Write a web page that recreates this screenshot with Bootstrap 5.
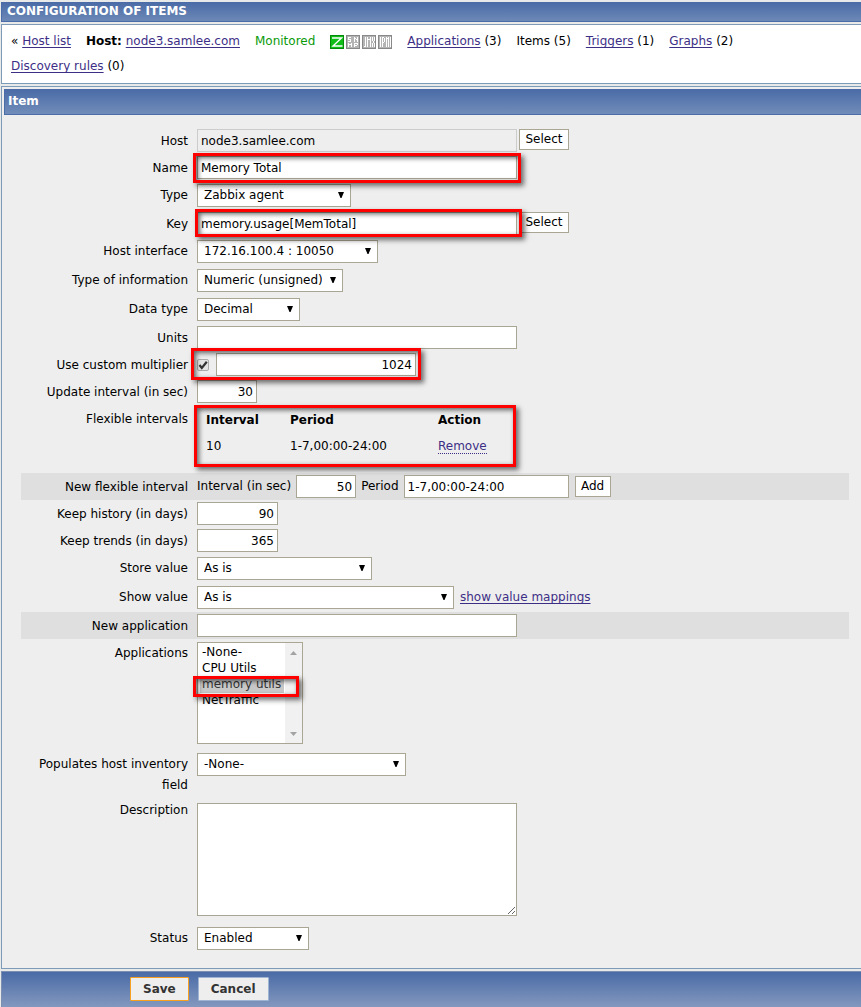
<!DOCTYPE html>
<html lang="en">
<head>
<meta charset="utf-8">
<meta name="viewport" content="width=device-width, initial-scale=1">
<title>Configuration of items</title>
<link href="https://cdn.jsdelivr.net/npm/bootstrap@5.3.0/dist/css/bootstrap.min.css" rel="stylesheet">
<style>
body{font-family:"DejaVu Sans",Verdana,sans-serif;font-size:12px;line-height:21px;color:#000;background:#e8eaea;padding:2px 0 0 1px}
a{color:#3d2f86;text-decoration:underline;text-underline-offset:2px;text-decoration-skip-ink:none}
.title-bar{height:20px;line-height:19px;font-size:12px;padding-left:5px;margin:0 0 2px;color:#fff;background:linear-gradient(#4a6ba7,#6c88b6);border:solid #4a6da9;border-width:0 0 1px 1px}
.host-nav{border:1px solid #7d9ab8;border-right:0;padding:4px 12px 4px 9px;column-gap:15px;background:#fff;margin-bottom:2px;line-height:25px}
.monitored{color:#0a9a0a}
.panel{border:1px solid #7d9ab8;border-right:0;background:#eee;padding:2px 0 15px 2px;margin-bottom:2px}
.item-bar{height:26px;line-height:24px;font-size:12px;padding-left:3px;margin:0 0 12px;color:#fff;background:linear-gradient(#4a6ba7,#718cb9);border:solid #4a6da9;border-width:0 0 1px 1px}
.form-rows{padding:0 12px 0 17px}
.f-row{display:flex;align-items:flex-start;padding:2px 0}
.f-row.sel{padding:3px 0}
.f-row.shade{background:#dfdfdf}
.f-row.flex-int{padding-bottom:14px}
.f-row.apps{padding-bottom:6px}
.f-row.inv{padding-bottom:0}
.f-row.desc{padding:4px 0 8px}
.f-row.desc .f-field{padding-top:3px}
.f-label{flex:0 0 167px;text-align:right;margin-right:9px;padding-top:2px}
.f-row.sel .f-label{padding-top:1px}
.f-row.desc .f-label{padding-top:0}
.f-field{display:flex;align-items:flex-start;position:relative}
.form-control,.form-select{font-size:12px;line-height:19px;color:#000;border:1px solid #aaa694;border-radius:0;background-color:#fff;height:23px;min-height:0;padding:1px 3px}
.form-control[readonly]{background:#eee;border-color:#ccc}
.form-select{padding:1px 20px 1px 6px;background-image:url("data:image/svg+xml,%3Csvg xmlns='http://www.w3.org/2000/svg' viewBox='0 0 6 6'%3E%3Cpath d='M0 0h6L3.5 6h-1z'/%3E%3C/svg%3E");background-size:6px 6px;background-position:right 6px top 7px}
textarea.form-control{height:113px;resize:both}
.num{text-align:right}
.w60{width:60px}.w81{width:81px}.w103{width:103px}.w112{width:112px}.w146{width:146px}.w154{width:154px}.w165{width:165px}.w175{width:175px}.w181{width:181px}.w200{width:200px}.w209{width:209px}.w257{width:257px}.w320{width:320px}
.btn-z{font-size:12px;line-height:17px;width:50px;height:21px;padding:1px 0;margin-left:2px;border:1px solid #aaa694;border-radius:0;background:#fff;color:#000}
.new-int{gap:5px}
.new-int .btn-z{width:36px;margin-left:1px}
.maps{margin-left:6px;padding-top:1px}
.btn-foot{font-size:12px;font-weight:700;line-height:18px;height:24px;padding:2px 12px;border:1px solid #9fb3d2;border-radius:1px;background:#eee;color:#333}
.btn-foot.main{border-color:#f8a020}
.form-check-input{width:12px;height:12px;margin:0 7px 0 0;border:1px solid #aaa;border-radius:2px!important}
.form-check-input:checked{border-color:#aaa;background:#e4e4e4 url("data:image/svg+xml,%3Csvg xmlns='http://www.w3.org/2000/svg' viewBox='0 0 10 10'%3E%3Cpath d='M1.5 5l2.3 3L8.8 1.8' fill='none' stroke='%23333' stroke-width='2.2'/%3E%3C/svg%3E") center/10px no-repeat}
.int-table{margin-left:9px;line-height:26px}
.int-table td,.int-table th{padding:0}
.int-table .c1{width:84px}.int-table .c2{width:148px}
.dotted{text-decoration:none;border-bottom:1px dotted #3d2f86}
.list-box{display:block;width:106px;height:102px;padding:2px 2px 0;border:1px solid #aaa694;border-radius:0;background:#fff;color:#000;font-size:12px;overflow:hidden;scrollbar-width:none}
.list-box option{height:16px;min-height:16px;line-height:16px;padding:0 2px;width:84px}
.list-box option:checked{background:#c8c8c8 linear-gradient(#c8c8c8,#c8c8c8);color:#333}
.scroll-strip{position:absolute;top:1px;bottom:1px;right:1px;width:17px;background:#f1f1f1;pointer-events:none}
.hl{position:absolute;border:3px solid #f00;box-shadow:3px 3px 5px rgba(0,0,0,.55),inset 2px 2px 5px rgba(0,0,0,.6);pointer-events:none;z-index:2}
.hl-name{inset:-3px -4px -4px -4px}
.hl-key{top:-3px;left:-2px;width:327px;height:28px}
.hl-mult{inset:-5px -5px -4px -6px}
.hl-int{top:-2px;left:-3px;width:322px;height:62px}
.hl-app{top:34px;left:-4px;width:106px;height:21px}
.foot{border:1px solid #7d8fb0;border-width:1px 0 0 1px;padding:5px 0 6px 128px;gap:9px;background:linear-gradient(#4a6ba7,#8398be)}
</style>
</head>
<body>
<h1 class="title-bar fw-bold">CONFIGURATION OF ITEMS</h1>
<nav class="host-nav d-flex flex-wrap">
  <span>« <a href="#">Host list</a></span>
  <span><b>Host:</b> <a href="#">node3.samlee.com</a></span>
  <span class="monitored">Monitored</span>
  <span class="d-flex align-items-center">
    <svg width="62" height="14" viewBox="0 0 62 14" shape-rendering="crispEdges" role="img" aria-label="Agent availability">
      <path fill="#078a0b" d="M0 0h14v14H0z"/><path fill="#10be18" d="M1 1h12v12H1z"/>
      <path d="M2 3h9.500l-8.500 8h9.500" fill="none" stroke="#fff" stroke-width="1.400" shape-rendering="auto"/>
      <path fill="#888" d="M16 0h14v14H16zM32 0h14v14H32zM48 0h14v14H48z"/>
      <path fill="#b4b4b4" d="M17 1h12v12H17zM33 1h12v12H33zM49 1h12v12H49z"/>
      <g fill="none" stroke="#fff">
        <path d="M18 2.500h3M18.500 3v1M18 4.500h3M20.500 5v1M18 6.500h3M24.500 2v5M27.500 2v5M25 3.500h1M26 4.500h1M18.500 8v4M21.500 8v4M19 9.500h2M24.500 8v4M25 8.500h2M27.500 8v2M25 10.500h2"/>
        <path d="M35.500 2v9M34 11.500h2M37.500 2v10M40.500 2v10M38 4.500h2M42.500 2v4M44.500 2v4M43.500 6v2M42.500 8v4M44.500 8v4"/>
        <path d="M50.500 2v10M52.500 2v10M53 2.500h1M54.500 3v4M53 7.500h1M56.500 2v10M58.500 2v10M57 3.500h1M60.500 2v10"/>
      </g>
    </svg>
  </span>
  <span><a href="#">Applications</a> (3)</span>
  <span>Items (5)</span>
  <span><a href="#">Triggers</a> (1)</span>
  <span><a href="#">Graphs</a> (2)</span>
  <span><a href="#">Discovery rules</a> (0)</span>
</nav>
<form>
<main class="panel">
  <h2 class="item-bar fw-bold">Item</h2>
  <div class="form-rows">
    <div class="f-row"><label class="f-label" for="host">Host</label>
      <div class="f-field"><input id="host" class="form-control w320" value="node3.samlee.com" readonly><button type="button" class="btn btn-z">Select</button></div></div>
    <div class="f-row"><label class="f-label" for="name">Name</label>
      <div class="f-field"><input id="name" class="form-control w320" value="Memory Total"><span class="hl hl-name"></span></div></div>
    <div class="f-row sel"><label class="f-label" for="type">Type</label>
      <div class="f-field"><select id="type" class="form-select w154"><option>Zabbix agent</option></select></div></div>
    <div class="f-row"><label class="f-label" for="key">Key</label>
      <div class="f-field"><input id="key" class="form-control w320" value="memory.usage[MemTotal]"><button type="button" class="btn btn-z">Select</button><span class="hl hl-key"></span></div></div>
    <div class="f-row sel"><label class="f-label" for="iface">Host interface</label>
      <div class="f-field"><select id="iface" class="form-select w181"><option>172.16.100.4 : 10050</option></select></div></div>
    <div class="f-row sel"><label class="f-label" for="info">Type of information</label>
      <div class="f-field"><select id="info" class="form-select w146"><option>Numeric (unsigned)</option></select></div></div>
    <div class="f-row sel"><label class="f-label" for="dtype">Data type</label>
      <div class="f-field"><select id="dtype" class="form-select w103"><option>Decimal</option></select></div></div>
    <div class="f-row"><label class="f-label" for="units">Units</label>
      <div class="f-field"><input id="units" class="form-control w320"></div></div>
    <div class="f-row"><label class="f-label" for="mult">Use custom multiplier</label>
      <div class="f-field align-items-center"><input type="checkbox" id="mult" class="form-check-input" checked><input class="form-control w200 num" value="1024" aria-label="Multiplier"><span class="hl hl-mult"></span></div></div>
    <div class="f-row"><label class="f-label" for="upd">Update interval (in sec)</label>
      <div class="f-field"><input id="upd" class="form-control w60 num" value="30"></div></div>
    <div class="f-row flex-int"><span class="f-label">Flexible intervals</span>
      <div class="f-field">
        <table class="int-table">
          <thead><tr><th class="c1">Interval</th><th class="c2">Period</th><th>Action</th></tr></thead>
          <tbody><tr><td>10</td><td>1-7,00:00-24:00</td><td><a href="#" class="dotted">Remove</a></td></tr></tbody>
        </table><span class="hl hl-int"></span>
      </div></div>
    <div class="f-row shade"><span class="f-label">New flexible interval</span>
      <div class="f-field align-items-center new-int"><label for="nint">Interval (in sec)</label><input id="nint" class="form-control w60 num" value="50"><label for="nper">Period</label><input id="nper" class="form-control w165" value="1-7,00:00-24:00"><button type="button" class="btn btn-z">Add</button></div></div>
    <div class="f-row"><label class="f-label" for="hist">Keep history (in days)</label>
      <div class="f-field"><input id="hist" class="form-control w81 num" value="90"></div></div>
    <div class="f-row"><label class="f-label" for="trend">Keep trends (in days)</label>
      <div class="f-field"><input id="trend" class="form-control w81 num" value="365"></div></div>
    <div class="f-row sel"><label class="f-label" for="store">Store value</label>
      <div class="f-field"><select id="store" class="form-select w175"><option>As is</option></select></div></div>
    <div class="f-row sel"><label class="f-label" for="show">Show value</label>
      <div class="f-field"><select id="show" class="form-select w257"><option>As is</option></select><a href="#" class="maps">show value mappings</a></div></div>
    <div class="f-row shade"><label class="f-label" for="napp">New application</label>
      <div class="f-field"><input id="napp" class="form-control w320"></div></div>
    <div class="f-row sel apps"><label class="f-label" for="apps">Applications</label>
      <div class="f-field">
        <select id="apps" class="list-box" multiple size="6"><option>-None-</option><option>CPU Utils</option><option selected>memory utils</option><option>NetTraffic</option></select>
        <svg class="scroll-strip" width="17" height="100" viewBox="0 0 17 100"><path fill="#a3a3a3" d="M5 12l3.500-4 3.500 4zM5 89l3.500 4 3.500-4z"/></svg>
        <span class="hl hl-app"></span>
      </div></div>
    <div class="f-row sel inv"><label class="f-label" for="inv">Populates host inventory field</label>
      <div class="f-field"><select id="inv" class="form-select w209"><option>-None-</option></select></div></div>
    <div class="f-row desc"><label class="f-label" for="desc">Description</label>
      <div class="f-field"><textarea id="desc" class="form-control w320"></textarea></div></div>
    <div class="f-row sel"><label class="f-label" for="status">Status</label>
      <div class="f-field"><select id="status" class="form-select w112"><option>Enabled</option></select></div></div>
  </div>
</main>
<div class="foot d-flex">
  <button type="submit" class="btn btn-foot main">Save</button>
  <button type="button" class="btn btn-foot">Cancel</button>
</div>
</form>
<script src="https://cdn.jsdelivr.net/npm/bootstrap@5.3.0/dist/js/bootstrap.bundle.min.js"></script>
</body>
</html>
